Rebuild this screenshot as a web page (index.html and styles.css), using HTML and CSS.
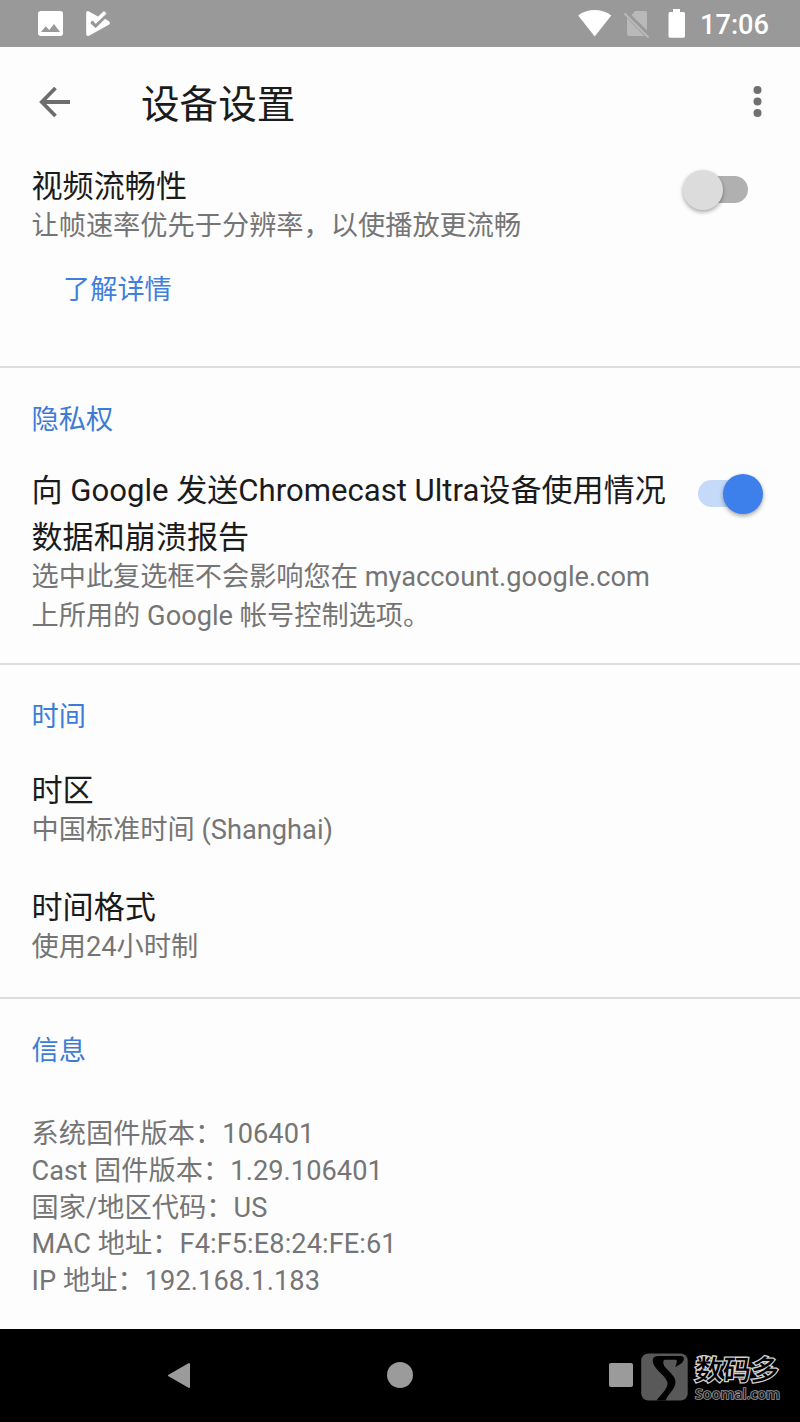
FILE: index.html
```html
<!DOCTYPE html>
<html lang="zh-CN">
<head>
<meta charset="utf-8">
<title>设备设置</title>
<link rel="stylesheet" href="styles.css">
</head>
<body>
<div class="screen">
  <header class="status-bar">
    <svg class="status-left" width="120" height="47" viewBox="0 0 120 47">
      <path fill="#fff" fill-rule="evenodd" d="M41 11H60.300Q63 11 63 13.700V33.300Q63 36 60.300 36H41Q38 36 38 33.300V13.700Q38 11 41 11ZM41 32H60L54 24L49.300 30L45.700 26.300Z"/>
      <path fill="#fff" d="M88.500 11.200L98 16.600L95.500 19.800L93.400 20.700L90.500 23.500L95.700 28L105 18.700L109.300 21.500Q110.600 23 109.300 24.500L89 35.800Q86.200 36.500 86.200 34V13Q86.200 10.500 88.500 11.200Z"/>
      <path fill="none" stroke="#fff" stroke-width="3.800" d="M94.500 22.500L105.300 12.300"/>
      <path fill="none" stroke="#999" stroke-width="2.400" d="M91.300 21.500L95.700 26L106.500 15.300"/>
    </svg>
    <div class="status-right">
      <svg width="120" height="47" viewBox="575 0 120 47">
        <path fill="#fff" d="M578.200 15.500Q585 10 594.600 10Q604.300 10 611.300 15.500L594.700 36.500Z"/>
        <path fill="#b9b9b9" d="M635 11H645Q647 11 647 13V30.500L631.500 15Z"/>
        <path fill="#b9b9b9" d="M627 18L644.500 36H629Q627 36 627 34Z"/>
        <path stroke="#b9b9b9" stroke-width="2.200" d="M624.500 13.500L648.500 37.500"/>
        <path fill="#fff" d="M673 9H680V12H683.500Q685 12 685 13.500V36Q685 37.700 683.500 37.700H670Q668.500 37.700 668.500 36V13.500Q668.500 12 670 12H673Z"/>
      </svg>
      <span class="clock">17:06</span>
    </div>
  </header>

  <div class="app-bar">
    <svg class="back" width="32" height="32" viewBox="0 0 32 32" fill="none" stroke="#6d6d6d" stroke-width="3.800">
      <path d="M31 16H3M16.500 2L2.800 16L16.500 30"/>
    </svg>
    <h1 class="app-title">设备设置</h1>
    <svg class="more" width="10" height="32" viewBox="0 0 10 32" fill="#707070">
      <circle cx="5.500" cy="4" r="4"/><circle cx="5.500" cy="15.500" r="4"/><circle cx="5.500" cy="27" r="4"/>
    </svg>
  </div>

  <main>
    <section class="section video">
      <div class="row">
        <div class="text">
          <div class="title">视频流畅性</div>
          <div class="sub">让帧速率优先于分辨率，以使播放更流畅</div>
        </div>
        <div class="switch off"><span class="thumb"></span></div>
      </div>
      <a class="link">了解详情</a>
    </section>

    <section class="section privacy">
      <h2 class="heading">隐私权</h2>
      <div class="row">
        <div class="text">
          <div class="title">向 Google 发送Chromecast Ultra设备使用情况<br>数据和崩溃报告</div>
          <div class="sub">选中此复选框不会影响您在 myaccount.google.com<br>上所用的 Google 帐号控制选项。</div>
        </div>
        <div class="switch on"><span class="thumb"></span></div>
      </div>
    </section>

    <section class="section time">
      <h2 class="heading">时间</h2>
      <div class="item">
        <div class="title">时区</div>
        <div class="sub">中国标准时间 (Shanghai)</div>
      </div>
      <div class="item">
        <div class="title">时间格式</div>
        <div class="sub">使用24小时制</div>
      </div>
    </section>

    <section class="section info">
      <h2 class="heading">信息</h2>
      <div class="details">
        <div>系统固件版本：106401</div>
        <div>Cast 固件版本：1.29.106401</div>
        <div>国家/地区代码：US</div>
        <div>MAC 地址：F4:F5:E8:24:FE:61</div>
        <div>IP 地址：192.168.1.183</div>
      </div>
    </section>
  </main>

  <nav class="nav-bar">
    <svg width="24" height="28" viewBox="0 0 24 28"><path fill="#9b9b9b" stroke="#9b9b9b" stroke-width="2" stroke-linejoin="round" d="M2 14.500L22 3V26Z"/></svg>
    <span class="home"></span>
    <span class="recent"></span>
    <div class="watermark">
      <svg width="48" height="48" viewBox="0 0 48 48">
        <rect x="1.200" y=".5" width="46.500" height="47" rx="7" fill="#595959"/>
        <path fill="#000" d="M12.700 7.500C13 3.500 16 3 20 3H41C45 3.200 44.500 7 42 10L35.500 14C35.500 12 38 8 36 6.700H25C22.500 6.700 23 11 25 14C29 19 35.500 23 35.500 29C35.500 36 28 41 25.500 47.500H16.500C20 42 27 37 27.500 31C28 23 13 17 12.700 7.500Z"/>
      </svg>
      <div class="mark-text">
        <div class="mark-cn">数码多</div>
        <div class="mark-en">Soomal.com</div>
      </div>
    </div>
  </nav>
</div>
</body>
</html>
```
FILE: styles.css
```css
* { box-sizing: border-box; }

body {
  margin: 0;
  background: #fdfdfd;
  font-family: Roboto, "Noto Sans CJK SC", sans-serif;
  font-size: 27.2px;
  color: #1b1b1b;
}

.screen {
  width: 800px;
  height: 1422px;
  display: flex;
  flex-direction: column;
  overflow: hidden;
}

.status-bar {
  height: 47px;
  background: #999;
  display: flex;
  justify-content: space-between;
  flex: none;
}

.status-right {
  display: flex;
  width: 225px;
}

.clock {
  color: #fff;
  font-weight: 500;
  line-height: 51px;
  margin-left: 5px;
  white-space: nowrap;
}

.app-bar {
  height: 110px;
  flex: none;
  display: flex;
  align-items: center;
  padding: 0 38px 1px 39px;
}

.app-title {
  margin: 7px 0 0 70px;
  flex: 1;
  font-size: 38.6px;
  font-weight: 400;
  line-height: 50px;
}

.more { flex: none; }

.section {
  padding: 32px 32px 0 31.5px;
  border-bottom: 2px solid #dedede;
}

.video { height: 211px; padding-top: 6.5px; }
.privacy { height: 297px; }
.time { height: 334px; }
.info { height: 330px; border-bottom: 0; }

.row {
  display: flex;
  justify-content: space-between;
}

.text { white-space: nowrap; }

.title {
  font-size: 31.1px;
  line-height: 46.5px;
}

.sub {
  margin-top: -3.5px;
  line-height: 39.6px;
  letter-spacing: .02px;
  color: #757575;
}

.link {
  display: block;
  margin: 24.2px 0 0 31.5px;
  line-height: 40px;
  color: #3f7fdd;
}

.heading {
  margin: 0;
  font-size: 27.2px;
  font-weight: 400;
  line-height: 40px;
  color: #3c7cd6;
}

.privacy .row { margin-top: 28.3px; }
.item { margin-top: 31.2px; }
.item + .item { margin-top: 34.4px; }

.details {
  margin-top: 45.4px;
  line-height: 36.67px;
  letter-spacing: .07px;
  color: #757575;
}

.switch {
  width: 65px;
  height: 40px;
  flex: none;
  display: flex;
  align-items: center;
}

.thumb {
  width: 40px;
  height: 40px;
  border-radius: 50%;
  flex: none;
  box-shadow: 0 2px 4px rgba(0, 0, 0, .35);
}

.switch::before {
  content: "";
  height: 27px;
  width: 50px;
  flex: none;
}

.switch.off { margin: 6px 20px 0 0; }
.switch.off::before { background: #b0b0b0; border-radius: 14px; margin-left: 15px; }
.switch.off .thumb { background: #dcdcdc; margin-left: -65px; }

.switch.on { margin: 5.5px 5.5px 0 0; }
.switch.on::before { background: #c5d9f9; border-radius: 14px; }
.switch.on .thumb { background: #3d7feb; margin-left: -25px; }

.nav-bar {
  position: relative;
  flex: 1;
  background: #000;
  display: flex;
  align-items: center;
  padding: 0 0 1px 167px;
}

.home {
  width: 26px;
  height: 26px;
  margin-left: 196px;
  border-radius: 50%;
  background: #9b9b9b;
}

.recent {
  width: 24px;
  height: 24px;
  margin-left: 196px;
  border-radius: 2px;
  background: #9b9b9b;
}

.watermark {
  position: absolute;
  left: 640px;
  top: 24px;
  display: flex;
  gap: 7px;
}

.mark-text { white-space: nowrap; }

.mark-cn {
  font: 500 28px/30px "Noto Sans CJK SC", sans-serif;
  color: #000;
  -webkit-text-stroke: 2.6px #d4d4d4;
  paint-order: stroke fill;
  transform: skewX(-4deg);
}

.mark-en {
  margin-top: 1px;
  font: 600 14.6px/18px "Open Sans", sans-serif;
  letter-spacing: -.15px;
  color: #1c1c1c;
  -webkit-text-stroke: 1.6px #999;
  paint-order: stroke fill;
}
```
